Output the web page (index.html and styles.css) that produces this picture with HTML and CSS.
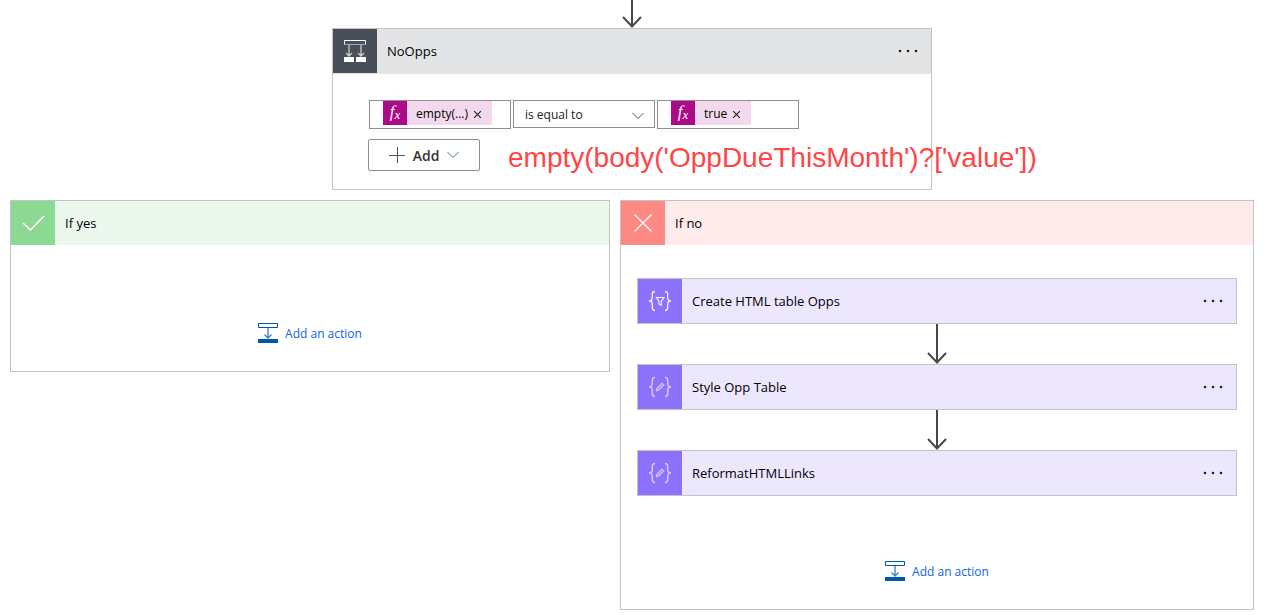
FILE: index.html
```html
<!DOCTYPE html>
<html lang="en">
  <head>
    <meta charset="UTF-8">
    <title>Flow designer</title>
    <meta name="viewport" content="width=device-width, initial-scale=1">
    <link rel="stylesheet" href="styles.css">
  </head>
  <body>
    <!-- Shared icons -->
    <svg class="sprite" aria-hidden="true">
      <symbol id="arrow" viewBox="0 0 22 40">
        <path d="M11 0V38M2 29L11 38.500L20 29" fill="none" stroke="#484848" stroke-width="2"/>
      </symbol>
      <symbol id="dots" viewBox="0 0 22 4">
        <circle cx="3" cy="2" r="1.300"/><circle cx="11" cy="2" r="1.300"/><circle cx="19" cy="2" r="1.300"/>
      </symbol>
      <symbol id="chevron" viewBox="0 0 12 8">
        <path d="M0.500 1L6 6.500L11.500 1" fill="none" stroke="currentColor"/>
      </symbol>
      <symbol id="add-step" viewBox="0 0 20 20">
        <path d="M0.500 0.500H19.500V4.500H0.500Z" fill="none" stroke="#0058ad"/>
        <path d="M10 5V15M6.500 11.500L10 15L13.500 11.500" fill="none" stroke="#3f7fbd" stroke-width="1.300"/>
        <path d="M0 16H20V20H0Z" fill="#0058ad"/>
      </symbol>
      <symbol id="compose" viewBox="0 0 24 24">
        <g fill="none" stroke="#d5c9ff" stroke-width="1.500">
          <path d="M7 2.500C4.500 2.500 4.300 3.500 4.300 5.500V8.500C4.300 10.800 3.500 12 1 12C3.500 12 4.300 13.200 4.300 15.500V18.500C4.300 20.500 4.500 21.500 7 21.500"/>
          <path d="M17 2.500C19.500 2.500 19.700 3.500 19.700 5.500V8.500C19.700 10.800 20.500 12 23 12C20.500 12 19.700 13.200 19.700 15.500V18.500C19.700 20.500 19.500 21.500 17 21.500"/>
        </g>
        <path d="M8 16L9 12.800L14 7.800L16.200 10L11.200 15Z" fill="#b5a2fc" stroke="#d5c9ff"/>
      </symbol>
    </svg>

    <main class="flow">
      <svg class="arrow arrow-top"><use href="#arrow"/></svg>

      <section class="card condition">
        <header class="card-header">
          <span class="card-icon">
            <svg width="24" height="24" viewBox="0 0 24 24">
              <path d="M1.500 1.500H22.500V5.500H1.500Z" fill="none" stroke="#fff"/>
              <path d="M1 5.500H23" stroke="#a4a8ad"/>
              <path d="M6 6V17M3 14L6 17L9 14M18 6V17M15 14L18 17L21 14" fill="none" stroke="#c9cccf" stroke-width="1.300"/>
              <path d="M1 18H11V23H1ZM13 18H23V23H13Z" fill="#fff"/>
            </svg>
          </span>
          <h2>NoOpps</h2>
          <button type="button" class="menu" aria-label="NoOpps menu"><svg><use href="#dots"/></svg></button>
        </header>
        <div class="condition-body">
          <div class="row">
            <div class="operand">
              <span class="token">
                <i class="fx">f<sub>x</sub></i>
                <span>empty(...)</span>
                <button type="button" aria-label="Remove empty"><svg viewBox="0 0 8 8"><path d="M1 1L7 7M7 1L1 7"/></svg></button>
              </span>
            </div>
            <div class="operator">
              <select aria-label="Operator">
                <option>is equal to</option>
                <option>is not equal to</option>
              </select>
              <svg class="chevron"><use href="#chevron"/></svg>
            </div>
            <div class="operand">
              <span class="token">
                <i class="fx">f<sub>x</sub></i>
                <span>true</span>
                <button type="button" aria-label="Remove true"><svg viewBox="0 0 8 8"><path d="M1 1L7 7M7 1L1 7"/></svg></button>
              </span>
            </div>
          </div>
          <button type="button" class="add">
            <svg class="plus" viewBox="0 0 16 16"><path d="M0 8.500H16M8.500 0V16"/></svg>
            Add
            <svg class="chevron"><use href="#chevron"/></svg>
          </button>
          <p class="note">empty(body('OppDueThisMonth')?['value'])</p>
        </div>
      </section>

      <div class="branches">
        <section class="card branch yes">
          <header class="card-header">
            <span class="card-icon">
              <svg width="24" height="24" viewBox="0 0 24 24"><path d="M2 12L9.500 19L23 5" fill="none" stroke="#fff" stroke-width="1.600"/></svg>
            </span>
            <h2>If yes</h2>
          </header>
          <div class="branch-body">
            <button type="button" class="add-action"><svg><use href="#add-step"/></svg>Add an action</button>
          </div>
        </section>

        <section class="card branch no">
          <header class="card-header">
            <span class="card-icon">
              <svg width="24" height="24" viewBox="0 0 24 24"><path d="M3.500 3.500L20.500 20.500M20.500 3.500L3.500 20.500" fill="none" stroke="#fff" stroke-width="1.300"/></svg>
            </span>
            <h2>If no</h2>
          </header>
          <div class="branch-body">
            <article class="card action">
              <div class="card-header">
                <span class="card-icon">
                  <svg width="24" height="24" viewBox="0 0 24 24" fill="none" stroke="#f0ebff" stroke-width="1.400">
                    <path d="M7 2.500C4.500 2.500 4.300 3.500 4.300 5.500V8.500C4.300 10.800 3.500 12 1 12C3.500 12 4.300 13.200 4.300 15.500V18.500C4.300 20.500 4.500 21.500 7 21.500"/>
                    <path d="M17 2.500C19.500 2.500 19.700 3.500 19.700 5.500V8.500C19.700 10.800 20.500 12 23 12C20.500 12 19.700 13.200 19.700 15.500V18.500C19.700 20.500 19.500 21.500 17 21.500"/>
                    <path d="M8.500 8.500H16L13.300 12.300V16.500L11 15V12.300Z" stroke-width="1.200"/>
                  </svg>
                </span>
                <h3>Create HTML table Opps</h3>
                <button type="button" class="menu" aria-label="Create HTML table Opps menu"><svg><use href="#dots"/></svg></button>
              </div>
            </article>
            <svg class="arrow"><use href="#arrow"/></svg>
            <article class="card action">
              <div class="card-header">
                <span class="card-icon"><svg width="24" height="24"><use href="#compose"/></svg></span>
                <h3>Style Opp Table</h3>
                <button type="button" class="menu" aria-label="Style Opp Table menu"><svg><use href="#dots"/></svg></button>
              </div>
            </article>
            <svg class="arrow"><use href="#arrow"/></svg>
            <article class="card action">
              <div class="card-header">
                <span class="card-icon"><svg width="24" height="24"><use href="#compose"/></svg></span>
                <h3>ReformatHTMLLinks</h3>
                <button type="button" class="menu" aria-label="ReformatHTMLLinks menu"><svg><use href="#dots"/></svg></button>
              </div>
            </article>
            <button type="button" class="add-action"><svg><use href="#add-step"/></svg>Add an action</button>
          </div>
        </section>
      </div>
    </main>
  </body>
</html>
```
FILE: styles.css
```css
* {
  box-sizing: border-box;
}

body {
  margin: 0;
  background: white;
  color: #000;
  font-family: "Open Sans", sans-serif;
  font-size: 13px;
}

button,
select {
  font-family: inherit;
  border: none;
  background: none;
  padding: 0;
  cursor: pointer;
}

svg {
  display: block;
  flex: none;
}

.sprite {
  display: none;
}

.flow {
  display: flex;
  flex-direction: column;
  align-items: center;
  padding: 0 12px 5px 10px;
}

.arrow {
  width: 22px;
  height: 40px;
}

.arrow-top {
  margin-top: -12px;
}

/* Cards */
.card {
  border: 1px solid #c4c4c4;
}

.card-header {
  display: flex;
  align-items: center;
  height: 44px;
}

.card-icon {
  display: flex;
  align-items: center;
  justify-content: center;
  width: 44px;
  height: 44px;
  flex: none;
}

.card-header h2,
.card-header h3 {
  flex: 1;
  margin: 0 0 0 10px;
  font-size: 13px;
  font-weight: 400;
  line-height: 20px;
}

.menu {
  padding: 10px;
  margin-right: 2px;
}

.menu svg {
  width: 22px;
  height: 4px;
  fill: #222;
}

/* Condition */
.condition {
  width: 100%;
  max-width: 600px;
}

.condition > .card-header {
  height: 45px;
  border-bottom: 1px solid #e3e4e6;
  background: #e3e4e6;
}

.condition .card-icon {
  background: #484f58;
}

.condition-body {
  position: relative;
  padding: 26px 35px 18px;
}

.row {
  display: flex;
  align-items: flex-start;
  gap: 2px;
  padding-left: 1px;
  margin-bottom: 10px;
}

.operand {
  width: 142px;
  height: 29px;
  padding-left: 13px;
  border: 1px solid #8f8f8f;
}

.token {
  display: inline-flex;
  align-items: center;
  gap: 5px;
  height: 24px;
  padding-right: 10px;
  background: #f2d9ed;
  font-size: 12px;
  vertical-align: top;
}

.fx {
  width: 24px;
  height: 24px;
  margin-right: 4px;
  background: #ad0a87;
  color: white;
  font: italic 17px/22px "Liberation Serif", serif;
  text-align: center;
}

.fx sub {
  font-size: 13px;
  line-height: 0;
  vertical-align: -2px;
}

.token svg {
  width: 9px;
  height: 9px;
  margin-top: 3px;
  fill: none;
  stroke: #222;
}

.operator {
  position: relative;
  width: 142px;
}

.operator select {
  appearance: none;
  display: block;
  width: 100%;
  height: 28px;
  padding-left: 11px;
  border: 1px solid #8f8f8f;
  border-radius: 0;
  color: #222;
  font-size: 12px;
}

.chevron {
  width: 12px;
  height: 8px;
  color: #555;
}

.operator .chevron {
  position: absolute;
  top: 12px;
  right: 11px;
  pointer-events: none;
}

.add {
  display: flex;
  align-items: center;
  justify-content: center;
  gap: 8px;
  width: 112px;
  height: 32px;
  border: 1px solid #8f8f8f;
  border-radius: 2px;
  color: #333;
  font-size: 14px;
  font-weight: 600;
}

.plus {
  width: 16px;
  height: 16px;
  stroke: #555;
}

.add .chevron {
  color: #3b7a9e;
}

.note {
  position: absolute;
  left: 175px;
  top: 68px;
  margin: 0;
  color: #ff4545;
  font: 28px/32px "Liberation Sans", sans-serif;
  white-space: nowrap;
}

/* Branches */
.branches {
  display: grid;
  grid-template-columns: 600fr 634fr;
  align-items: start;
  gap: 10px;
  width: 100%;
  margin-top: 10px;
}

.branch-body {
  display: flex;
  flex-direction: column;
  align-items: center;
  padding: 33px 16px 28px;
}

.yes > .card-header {
  background: #ecf7ee;
}

.yes .card-icon {
  background: #8cd993;
}

.no > .card-header {
  background: #ffebeb;
}

.no > .card-header .card-icon {
  background: #fc8983;
}

.action {
  width: 100%;
  background: #ede7fe;
}

.action .card-icon {
  background: #8c71fa;
}

.add-action {
  display: flex;
  align-items: center;
  gap: 7px;
  height: 20px;
  color: #0f62e8;
  font-size: 12px;
}

.add-action svg {
  width: 20px;
  height: 20px;
}

.yes .add-action {
  margin-top: 45px;
}

.no .add-action {
  margin-top: 65px;
}
```
